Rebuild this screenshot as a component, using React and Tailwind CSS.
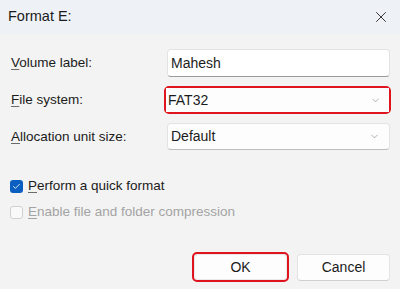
import { ChevronDown, X, Check } from "lucide-react";

function Label({ k, rest }) {
  return (
    <span className="text-[13.5px] leading-[20px] text-[#1b1b1b]">
      <span className="underline underline-offset-2 decoration-[#6b6b6b]">{k}</span>
      {rest}
    </span>
  );
}

function Select({ value }) {
  return (
    <div className="flex h-[27px] w-[223px] items-center justify-between rounded-[4px] border border-[#e3e3e3] border-b-[#bdbdbd] bg-[#fdfdfd] pl-[3px] pr-[9px] text-[14px] text-[#1b1b1b]">
      <span>{value}</span>
      <ChevronDown size={11} strokeWidth={1.4} className="text-[#8a8a8a]" />
    </div>
  );
}

export default function App() {
  return (
    <div className="h-[289px] w-[400px] bg-[#f3f3f3] font-['Liberation_Sans',Arial,sans-serif] overflow-hidden">
      {/* title bar */}
      <div className="flex h-[34px] items-center justify-between bg-[#eef2f7] pl-[8px] pr-[10px]">
        <span className="text-[14.5px] text-[#1b1b1b]">Format E:</span>
        <X size={18} strokeWidth={1.2} className="text-[#222]" />
      </div>

      {/* fields */}
      <div className="mt-[15px] flex flex-col gap-[9px] pl-[11px] pr-[10px]">
        <div className="flex items-center justify-between">
          <Label k="V" rest="olume label:" />
          <div className="flex h-[28px] w-[223px] items-center rounded-[4px] border border-[#e3e3e3] border-b-[#9a9a9a] bg-white pl-[3px] text-[14px] text-[#1b1b1b]">
            Mahesh
          </div>
        </div>
        <div className="flex items-center justify-between">
          <Label k="F" rest="ile system:" />
          <div className="-mr-[1px] rounded-[5px] border-2 border-[#e0141e]">
            <div className="flex h-[24px] w-[223px] items-center justify-between bg-[#fdfdfd] pl-[2px] pr-[8px] text-[14px] text-[#1b1b1b]">
              <span>FAT32</span>
              <ChevronDown size={11} strokeWidth={1.4} className="text-[#8a8a8a]" />
            </div>
          </div>
        </div>
        <div className="flex items-center justify-between">
          <Label k="A" rest="llocation unit size:" />
          <Select value="Default" />
        </div>
      </div>

      {/* checkboxes */}
      <div className="mt-[26px] flex flex-col gap-[6px] pl-[10px]">
        <div className="flex h-[20px] items-center gap-[5px]">
          <div className="flex h-[13px] w-[13px] items-center justify-center rounded-[3px] bg-[#0a5fc0]">
            <Check size={9} strokeWidth={2.2} className="text-white" />
          </div>
          <Label k="P" rest="erform a quick format" />
        </div>
        <div className="flex h-[20px] items-center gap-[5px]">
          <div className="h-[13px] w-[13px] rounded-[3px] border border-[#d0d0d0] bg-[#f9f9f9]" />
          <span className="text-[13.5px] leading-[20px] text-[#a3a3a3]">
            <span className="underline underline-offset-2">E</span>nable file and folder compression
          </span>
        </div>
      </div>

      {/* buttons */}
      <div className="mt-[30px] flex items-center justify-end gap-[8px] pr-[10px]">
        <div className="rounded-[5px] border-2 border-[#e0141e] p-[1px]">
          <div className="flex h-[24px] w-[91px] items-center justify-center rounded-[3px] bg-[#fdfdfd] text-[14px] text-[#1b1b1b] shadow-[0_0_2px_rgba(0,0,0,0.15)]">
            OK
          </div>
        </div>
        <div className="flex h-[27px] w-[93px] items-center justify-center rounded-[4px] border border-[#e3e3e3] border-b-[#cfcfcf] bg-[#fdfdfd] text-[14px] text-[#1b1b1b]">
          Cancel
        </div>
      </div>
    </div>
  );
}
